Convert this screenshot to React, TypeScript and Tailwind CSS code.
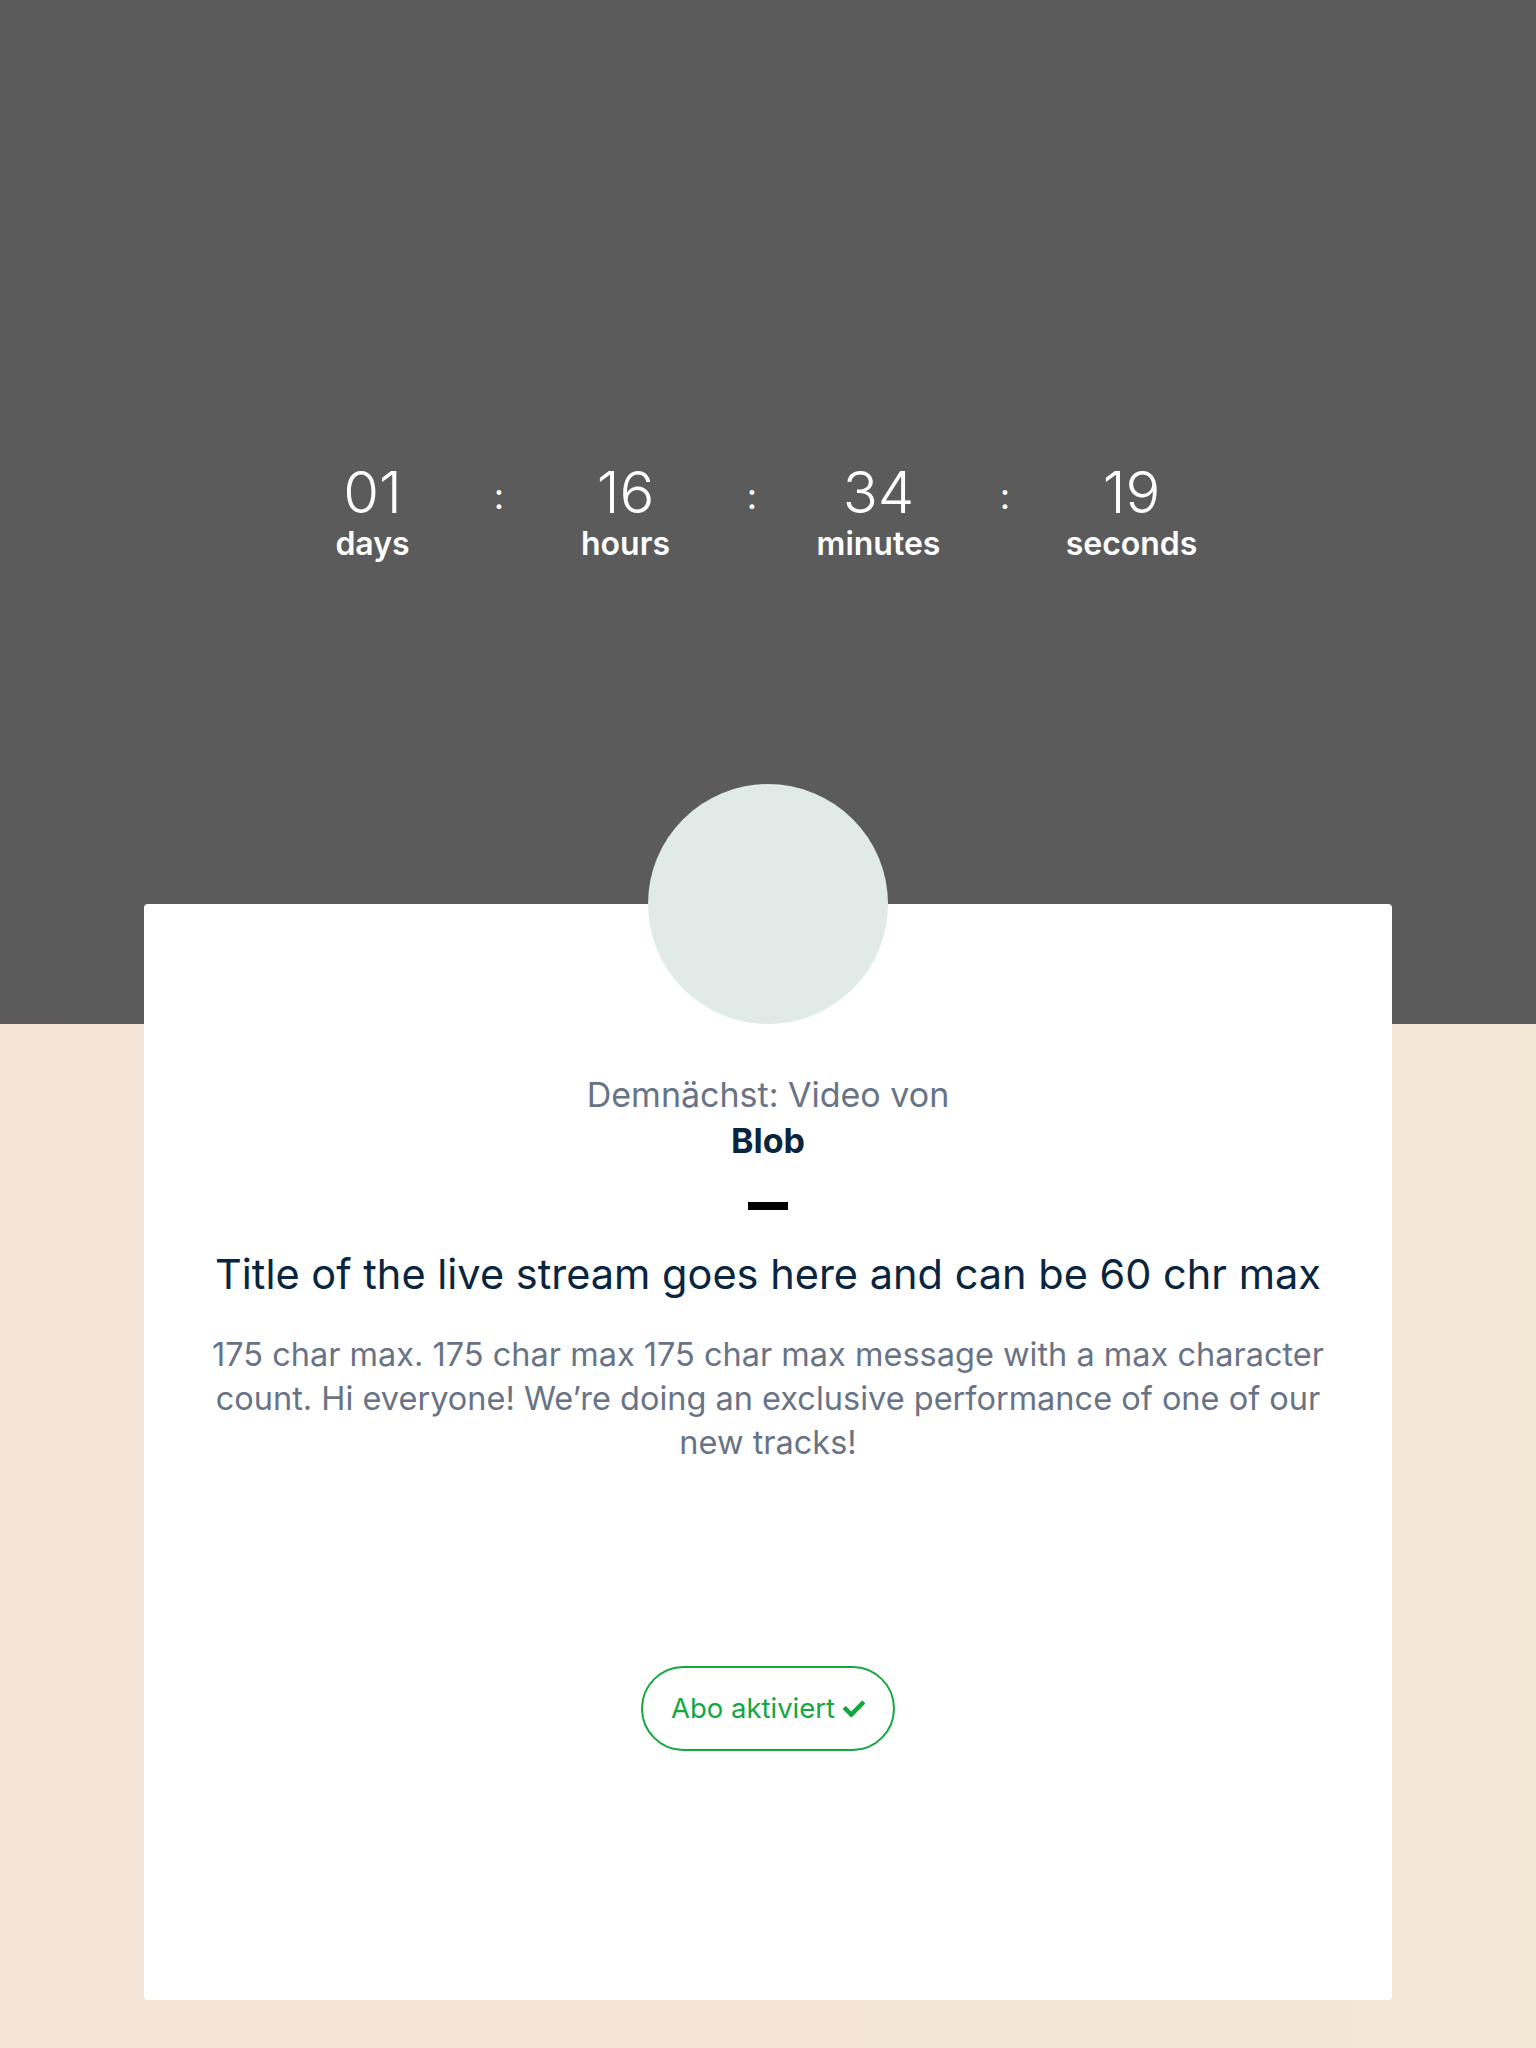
import { FaCheck } from "react-icons/fa";

const units = [
  { value: "01", label: "days" },
  { value: "16", label: "hours" },
  { value: "34", label: "minutes" },
  { value: "19", label: "seconds" },
];

function Countdown() {
  return (
    <div className="flex items-start justify-center pr-[32px]">
      {units.map((u, i) => (
        <div key={u.label} className="flex items-start">
          <div className="flex w-[180px] flex-col items-center text-white">
            <span className="text-[58px] font-light leading-[64px]">{u.value}</span>
            <span className="mt-[2px] text-[32px] font-semibold leading-[36px]">{u.label}</span>
          </div>
          {i < units.length - 1 && (
            <span className="w-[73px] pt-[4px] text-center text-[36px] leading-[64px] text-white">:</span>
          )}
        </div>
      ))}
    </div>
  );
}

export default function App() {
  return (
    <div
      className="min-h-[2048px] bg-gradient-to-r from-[#f5e3d8] to-[#f3e7d6] pb-[48px]"
      style={{ fontFamily: "Inter, 'Noto Sans', sans-serif" }}
    >
      <div className="h-[1024px] bg-[#5b5b5b] pt-[460px]">
        <Countdown />
      </div>

      <div className="mx-[144px] -mt-[120px] flex h-[1096px] flex-col items-center rounded-[4px] bg-white text-center">
        <div className="-mt-[120px] h-[240px] w-[240px] rounded-full bg-[#e0ebe7]" />

        <p className="mt-[48px] text-[34px] leading-[46px] text-[#697386]">Demnächst: Video von</p>
        <p className="text-[34px] font-bold leading-[46px] text-[#0a2540]">Blob</p>

        <div className="mt-[38px] h-[8px] w-[40px] bg-black" />

        <h1 className="mt-[38px] text-[41.5px] leading-[52px] text-[#0a2540]">
          Title of the live stream goes here and can be 60 chr max
        </h1>

        <p className="mt-[33px] text-[32.5px] leading-[44px] text-[#697386]">
          175 char max. 175 char max 175 char max message with a max character
          <br />
          count. Hi everyone! We’re doing an exclusive performance of one of our
          <br />
          new tracks!
        </p>

        <button className="mt-[201px] flex h-[85px] w-[254px] items-center justify-center gap-[8px] rounded-full border-2 border-[#12a83f] text-[27.5px] text-[#12a83f]">
          <span>Abo aktiviert</span>
          <FaCheck size={22} />
        </button>
      </div>
    </div>
  );
}
